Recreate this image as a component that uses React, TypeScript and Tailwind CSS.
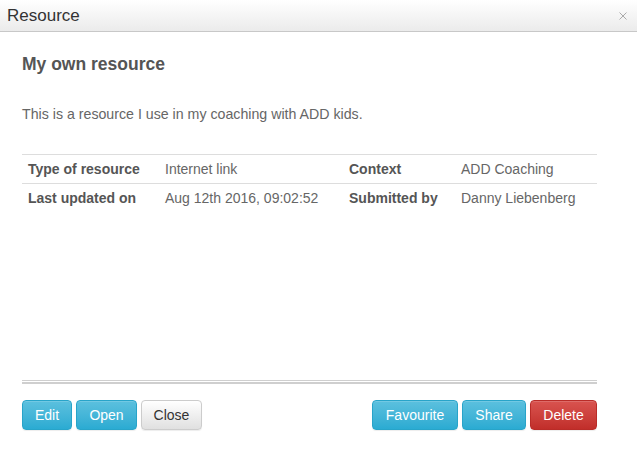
export default function App() {
  const btnInfo =
    "h-[30px] px-3 rounded-[4px] border border-[#28a4c9] bg-gradient-to-b from-[#5bc0de] to-[#2aabd2] text-white text-[14px] leading-none shadow-[inset_0_1px_0_rgba(255,255,255,0.15),0_1px_1px_rgba(0,0,0,0.075)]";
  return (
    <div className="w-[637px] h-[450px] bg-white text-[#555] font-['Liberation_Sans',Arial,sans-serif] flex flex-col">
      {/* Header */}
      <div className="h-[32px] shrink-0 flex items-center justify-between pl-[7px] pr-[10px] bg-gradient-to-b from-white to-[#ebebeb] border-b border-[#c8c8c8]">
        <span className="text-[17px] text-[#333]">Resource</span>
        <svg width="8" height="8" viewBox="0 0 8 8" className="text-[#aaa]">
          <path d="M0.5 0.5L7.5 7.5M7.5 0.5L0.5 7.5" stroke="currentColor" strokeWidth="1" />
        </svg>
      </div>

      <div className="flex-1 flex flex-col px-[22px] pr-[40px]">
        <h2 className="mt-[22px] text-[17.5px] font-bold text-[#555] leading-[20px]">My own resource</h2>
        <p className="mt-[30px] text-[14.2px] leading-[20px] text-[#666]">
          This is a resource I use in my coaching with ADD kids.
        </p>

        <table className="mt-[30px] w-full text-[14px] border-collapse">
          <tbody>
            <tr className="border-t border-[#ddd] h-[29px]">
              <td className="pl-[6px] font-bold text-[#555] w-[143px]">Type of resource</td>
              <td className="text-[#666] w-[184px]">Internet link</td>
              <td className="font-bold text-[#555] w-[112px]">Context</td>
              <td className="text-[#666]">ADD Coaching</td>
            </tr>
            <tr className="border-t border-[#ddd] h-[29px]">
              <td className="pl-[6px] font-bold text-[#555]">Last updated on</td>
              <td className="text-[#666]">Aug 12th 2016, 09:02:52</td>
              <td className="font-bold text-[#555]">Submitted by</td>
              <td className="text-[#666]">Danny Liebenberg</td>
            </tr>
          </tbody>
        </table>

        <div className="mt-auto h-[4px] border-t-[1px] border-b-[2px] border-[#cfcfcf] border-double mb-[16px]" />

        <div className="flex items-center justify-between mb-[20px]">
          <div className="flex gap-[4px]">
            <button className={`${btnInfo} w-[50px]`}>Edit</button>
            <button className={`${btnInfo} w-[61px]`}>Open</button>
            <button className="h-[30px] w-[61px] rounded-[4px] border border-[#ccc] bg-gradient-to-b from-white to-[#e0e0e0] text-[#333] text-[14px] leading-none shadow-[0_1px_1px_rgba(0,0,0,0.075)]">
              Close
            </button>
          </div>
          <div className="flex gap-[4px]">
            <button className={`${btnInfo} w-[86px]`}>Favourite</button>
            <button className={`${btnInfo} w-[64px]`}>Share</button>
            <button className="h-[30px] w-[67px] rounded-[4px] border border-[#b92c28] bg-gradient-to-b from-[#d9534f] to-[#c12e2a] text-white text-[14px] leading-none shadow-[inset_0_1px_0_rgba(255,255,255,0.15),0_1px_1px_rgba(0,0,0,0.075)]">
              Delete
            </button>
          </div>
        </div>
      </div>
    </div>
  );
}
